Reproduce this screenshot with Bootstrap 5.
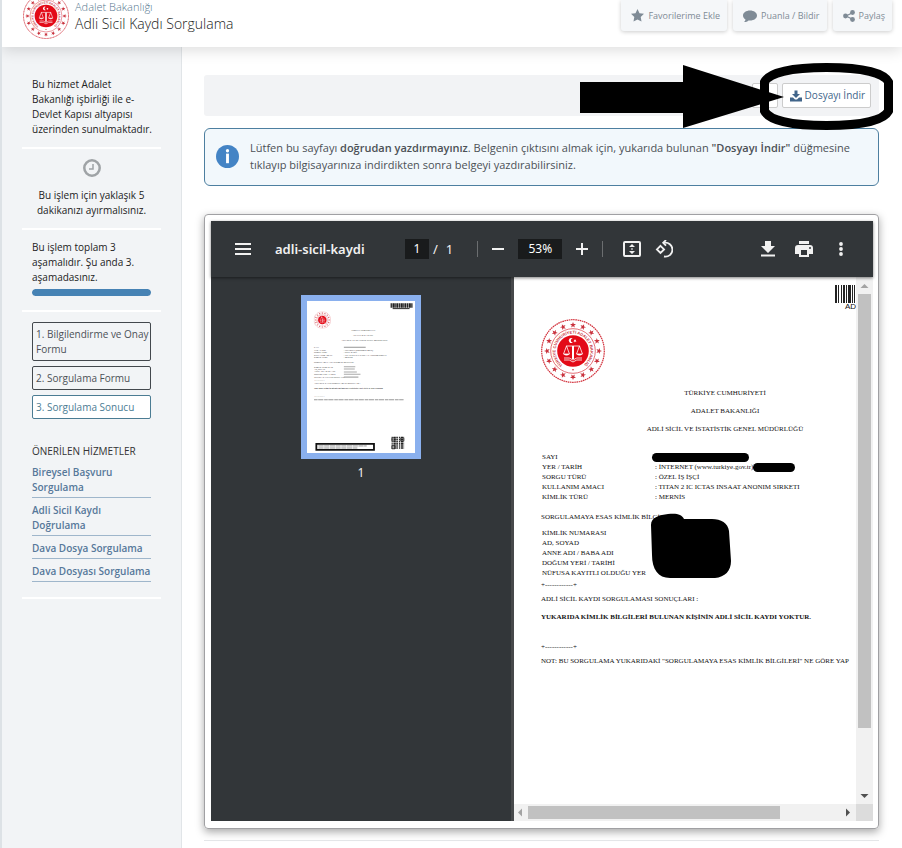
<!DOCTYPE html>
<html lang="tr">
<head>
<meta charset="utf-8">
<meta name="viewport" content="width=device-width, initial-scale=1">
<title>Adli Sicil Kaydı Sorgulama</title>
<link href="https://cdn.jsdelivr.net/npm/bootstrap@5.3.0/dist/css/bootstrap.min.css" rel="stylesheet">
<style>
body{font-family:"Open Sans","Noto Sans",sans-serif;font-size:10px;line-height:15px;color:#33383d;background:#fff;border-left:2px solid #dde2e6;min-height:100vh;overflow-x:hidden}
svg{display:block;flex-shrink:0}
.site-head{height:47px;background:#fff;box-shadow:0 3px 14px rgba(0,0,0,.14);position:relative;z-index:2;padding:0 10px 0 21px}
.site-head a{color:#56788f;font-size:11px;line-height:13px;text-decoration:none;font-weight:300}
.site-head h1{font-size:14px;line-height:20px;font-weight:300;margin:1px 0 0;color:#222}
.head-text{margin-left:6px}
.tools{gap:6px}
.tool{height:31px;border:0;border-radius:0 0 3px 3px;background:#f5f7f9;box-shadow:0 1px 4px rgba(0,0,0,.2);color:#7f8b96;font-size:9px;line-height:15px;padding:0 7px 0 10px;gap:4px}
.side{width:180px;flex-shrink:0;background:#f2f4f6;border-right:1px solid #e1e5e8;padding:20px 20px 0;color:#222}
.side section{padding:10px;border-bottom:2px solid #fff}
.side .intro{white-space:nowrap;padding-right:0}
.clock{margin-bottom:11px}
.meter{height:7px;border-radius:4px;background:#e1e5e8}
.meter .progress-bar{background:#4682b4;border-radius:4px}
.step{border:1px solid #43484d;border-radius:2px;padding:4px 0 3px 3px;margin-bottom:5px;color:#4c5156;white-space:nowrap}
.step.now{border-color:#4b7c93;background:#fff;color:#4b7c93}
.side h2{font-size:10px;line-height:15px;margin:25px 0 6px;color:#333}
.side li a{display:block;color:#56789a;font-weight:600;text-decoration:none;border-bottom:1px solid #9fb6cb;padding-bottom:2px}
.side li{margin-bottom:5px}
.main-area{min-width:0;padding:28px 23px 8px 22px}
.action-bar{background:#f2f3f5;height:41px;border-radius:3px;padding:0 8px}
.act{border:1px solid #ccc;border-radius:2px;background:#fff;height:25px;font-size:10px;color:#41658a;padding:0 5px 0 7px;gap:3px;font-weight:500}
.callout{right:-14px;top:-12px;pointer-events:none}
.note{border:1px solid #4d7fa0;border-radius:6px;background:#f2f8fc;margin:12px 0 28px;padding:10px 20px 12px 11px;font-size:11px;line-height:17px;gap:11px;color:#4c5156}
.note strong{font-weight:600}
.frame{border:1px solid #a0a0a3;border-radius:4px;padding:6px 5px 7px 6px;box-shadow:0 3px 8px rgba(0,0,0,.35)}
.pdf-bar{height:56px;background:#323639;color:#f1f1f1;padding:0 24px;font:13px/20px "Noto Sans","Open Sans",sans-serif;box-shadow:0 1px 3px rgba(0,0,0,.5);position:relative;z-index:1}
.pdf-bar button{border:0;background:none;padding:0;color:#f1f1f1}
.pdf-bar .gap-a{margin-left:14px}
.pdf-bar .gap-b{margin-left:20px}
.pdf-name{width:130px;margin-left:24px;font-weight:600}
.pdf-bar input{width:24px;height:20px;border:0;background:#191b1c;color:#fff;text-align:center;font-size:12px;padding:0}
.pdf-bar input.zoom-box{width:44px}
.vr-line{width:1px;height:16px;background:#6b6e70}
.pdf-body{height:544px;background:#323639}
.thumbs{width:300px;flex-shrink:0;color:#f1f1f1;font:12px/18px "Noto Sans",sans-serif;padding-top:18px}
.thumb{border:6px solid #8ab0ee;background:#fff;margin-bottom:5px}
.view{border-left:3px solid #47494b;background:#fff;min-width:0}
.view-row{min-height:0}
.doc{font:7px/10px "Liberation Serif",serif;color:#111;overflow:hidden;padding:0 0 0 27px;white-space:nowrap;min-width:0;position:relative}
.doc h2,.doc h3{font-size:7px;line-height:18px;margin:0;font-weight:400}
.doc .seal{margin:42px 0 1px}
.doc .centre{width:370px;margin-left:-1px;text-align:center}
.doc table{margin-bottom:2px}
.doc .query{margin:14px 0 6px}
.doc h3{margin-bottom:2px}
.doc th{font-weight:400;width:114px;padding:0 0 0 1px}
.doc td{padding:0}
.doc p{margin:0}
.code{right:0;top:8px}
.code span{font:8px/7px "Liberation Sans",sans-serif}
.redact{background:#000;border-radius:5px;height:9px;width:42px;display:inline-block;vertical-align:middle}
.redact.long{width:97px;margin-left:-3px}
.blot{left:136px;top:236px}
.bar-v{width:17px;background:#f1f1f1;flex-shrink:0}
.bar-v .grip{width:13px;height:434px;background:#c1c1c1}
.bar-h{height:17px;background:#f1f1f1}
.bar-h .grip{height:13px;width:252px;background:#c1c1c1}
.end-rule{border-top:1px solid #e4e6e8;margin:11px 0 0}
</style>
<script src="https://cdn.jsdelivr.net/npm/bootstrap@5.3.0/dist/js/bootstrap.bundle.min.js"></script>
</head>
<body>
<svg width="0" height="0" class="position-absolute" aria-hidden="true">
<defs>
<path id="star" d="M0-3 .8-.9 3-.9 1.2.4 1.9 2.6 0 1.3-1.9 2.6-1.2.4-3-.9-.8-.9Z"/>
<path id="ring" d="M-11 13.500A17.400 17.400 0 1 1 11 13.500"/>
<symbol id="emblem" viewBox="-32 -32 64 64">
<circle r="31.3" fill="#fff" stroke="#d2303b" stroke-width="1.2" stroke-dasharray="1.6 .6"/>
<circle r="22.300" fill="none" stroke="#d8323e" stroke-width=".7"/>
<circle r="15.800" fill="#e30a17"/>
<g fill="#c9313c"><use href="#star" y="-26"/><use href="#star" y="-26" transform="rotate(22.5)"/><use href="#star" y="-26" transform="rotate(45)"/><use href="#star" y="-26" transform="rotate(67.5)"/><use href="#star" y="-26" transform="rotate(90)"/><use href="#star" y="-26" transform="rotate(112.5)"/><use href="#star" y="-26" transform="rotate(135)"/><use href="#star" y="-26" transform="rotate(157.5)"/><use href="#star" y="-26" transform="rotate(180)"/><use href="#star" y="-26" transform="rotate(202.5)"/><use href="#star" y="-26" transform="rotate(225)"/><use href="#star" y="-26" transform="rotate(247.5)"/><use href="#star" y="-26" transform="rotate(270)"/><use href="#star" y="-26" transform="rotate(292.5)"/><use href="#star" y="-26" transform="rotate(315)"/><use href="#star" y="-26" transform="rotate(337.5)"/></g>
<text font-family="Liberation Sans" font-size="4" font-weight="700" fill="#c9313c" text-anchor="middle"><textPath href="#ring" startOffset="50%">TÜRKİYE CUMHURİYETİ ADALET BAKANLIĞI</textPath></text>
<circle cy="18.800" r=".8" fill="#c9212d"/>
<g fill="none" stroke="#fff" stroke-width=".8"><path d="M-7-5H7M-6.500-5-9.500 3H-3.500ZM6.500-5 3.500 3H9.500ZM-9 7Q-3 6 0 9Q3 6 9 7M-9 9Q-3 8 0 11Q3 8 9 9"/></g>
<path fill="#fff" d="M-9.500 3H-3.500Q-6.500 6-9.500 3ZM3.500 3H9.500Q6.500 6 3.500 3ZM-1-5H1V8H-1ZM-.2-12.500A2.500 2.500 0 1 0-.2-8.500A2 2 0 1 1-.2-12.500ZM1-11.500l1 .6 1-.6-.3 1.200 1 .6-1.200.3-.6 1-.4-1.100-1.200-.2 1-.7Z"/>
</symbol>
</defs>
</svg>

<header class="site-head d-flex align-items-start">
  <svg width="46" height="39" viewBox="0 7 46 39" aria-hidden="true"><use href="#emblem" width="46" height="46"/></svg>
  <div class="head-text d-flex flex-column"><a href="#">Adalet Bakanlığı</a><h1>Adli Sicil Kaydı Sorgulama</h1></div>
  <div class="tools d-flex ms-auto">
    <button class="tool d-flex align-items-center"><svg width="13" height="13" viewBox="0 0 24 24" fill="currentColor"><path d="m12 0 3.700 7.800 8.300 1.100-6.100 5.800 1.500 8.600L12 19.200l-7.400 4.100 1.500-8.600L0 8.900l8.300-1.100Z"/></svg>Favorilerime Ekle</button>
    <button class="tool d-flex align-items-center"><svg width="14" height="12" viewBox="0 0 28 24" fill="currentColor"><path d="M14 1C6 1 0 5.500 0 11c0 3.300 2 6 5 7.900C4.800 21 3.500 22.500 2 24c4 0 7-1.200 9-3.200 10 1.200 17-3.400 17-9.800C28 5.500 22 1 14 1Z"/></svg>Puanla / Bildir</button>
    <button class="tool d-flex align-items-center"><svg width="12" height="12" viewBox="0 0 24 24" fill="currentColor"><path d="m6 12 13-6.500M6 12l13 6.500" stroke="currentColor" stroke-width="2.600"/><circle cx="5" cy="12" r="4.800"/><circle cx="19" cy="5" r="4.800"/><circle cx="19" cy="19" r="4.800"/></svg>Paylaş</button>
  </div>
</header>

<div class="d-flex align-items-stretch">
  <aside class="side">
    <section class="intro">Bu hizmet Adalet<br>Bakanlığı işbirliği ile e-<br>Devlet Kapısı altyapısı<br>üzerinden sunulmaktadır.</section>
    <section class="text-center">
      <svg class="clock mx-auto" width="18" height="18" viewBox="0 0 18 18" fill="none" stroke="#9fa3a6"><circle cx="9" cy="9" r="7.700" stroke-width="2.500"/><path d="M10 5V10H6" stroke-width="1.500"/></svg>
      Bu işlem için yaklaşık 5 dakikanızı ayırmalısınız.
    </section>
    <section>Bu işlem toplam 3 aşamalıdır. Şu anda 3. aşamadasınız.
      <div class="progress meter mt-1 mb-1" role="progressbar" aria-label="Aşama" aria-valuenow="3" aria-valuemin="0" aria-valuemax="3"><div class="progress-bar" style="width:100%"></div></div>
    </section>
    <section>
      <div class="step">1. Bilgilendirme ve Onay<br>Formu</div>
      <div class="step">2. Sorgulama Formu</div>
      <div class="step now">3. Sorgulama Sonucu</div>
      <h2>ÖNERİLEN HİZMETLER</h2>
      <ul class="list-unstyled mb-0">
        <li><a href="#">Bireysel Başvuru Sorgulama</a></li>
        <li><a href="#">Adli Sicil Kaydı Doğrulama</a></li>
        <li><a href="#">Dava Dosya Sorgulama</a></li>
        <li><a href="#">Dava Dosyası Sorgulama</a></li>
      </ul>
    </section>
  </aside>

  <main class="main-area flex-grow-1">
    <div class="action-bar d-flex align-items-center justify-content-end position-relative">
      <button class="act me-1" aria-label="Yazdır"><svg width="12" height="12"></svg></button>
      <button class="act d-flex align-items-center"><svg width="12" height="12" viewBox="0 0 24 24" fill="currentColor"><path d="M9 1h6v7h5l-8 8-8-8h5ZM0 15h6l4 4h4l4-4h6v8H0Z"/></svg>Dosyayı İndir</button>
      <svg class="callout position-absolute" width="313" height="67" viewBox="0 0 313 67" aria-hidden="true"><path d="M0 19H103V2L204 34 103 65V50H0Z"/><path fill="none" stroke="#000" stroke-width="9" d="M184.500 19C189 10 210 4.500 246.500 4.500S304 10 308.500 19V48C304 57 283 62.500 246.500 62.500S189 57 184.500 48Z"/></svg>
    </div>

    <div class="note d-flex align-items-center">
      <svg width="23" height="23" viewBox="0 0 24 24"><circle cx="12" cy="12" r="12" fill="#4484c5"/><circle cx="12" cy="6" r="1.700" fill="#fff"/><path d="M10.500 9h3v10h-3Z" fill="#fff"/></svg>
      <div>Lütfen bu sayfayı <strong>doğrudan yazdırmayınız</strong>. Belgenin çıktısını almak için, yukarıda bulunan <strong>"Dosyayı İndir"</strong> düğmesine tıklayıp bilgisayarınıza indirdikten sonra belgeyi yazdırabilirsiniz.</div>
    </div>

    <div class="frame">
      <div class="pdf-bar d-flex align-items-center">
        <button aria-label="Menü"><svg width="16" height="12" viewBox="0 0 16 12" fill="currentColor"><path d="M0 0h16v2H0ZM0 5h16v2H0ZM0 10h16v2H0Z"/></svg></button>
        <div class="pdf-name">adli-sicil-kaydi</div>
        <input value="1" aria-label="Sayfa"><span class="ms-1">/</span><span class="ms-2">1</span>
        <span class="vr-line ms-4"></span>
        <button class="gap-a" aria-label="Uzaklaştır"><svg width="12" height="12" fill="currentColor"><path d="M0 5h12v2H0Z"/></svg></button>
        <input class="zoom-box gap-a" value="53%" aria-label="Yakınlaştırma">
        <button class="gap-a" aria-label="Yakınlaştır"><svg width="12" height="12" fill="currentColor"><path d="M0 5h5V0h2v5h5v2H7v5H5V7H0Z"/></svg></button>
        <span class="vr-line gap-a"></span>
        <button class="gap-b" aria-label="Sayfaya sığdır"><svg width="18" height="16" viewBox="0 0 18 16" fill="currentColor"><path fill-rule="evenodd" d="M2 0h14q2 0 2 2v12q0 2-2 2H2q-2 0-2-2V2Q0 0 2 0Zm0 2v12h14V2Z"/><path d="m9 3 3 3H6ZM9 13l-3-3h6ZM8.300 7.300h1.400v1.400H8.300Z"/></svg></button>
        <button class="gap-a" aria-label="Döndür"><svg width="18" height="18" viewBox="0 0 18 18" fill="none" stroke="currentColor" stroke-width="1.800"><path d="m5.500 5.800 3.600 3.600-3.600 3.600L1.900 9.400ZM9 16.500A7 7 0 1 0 9 2.800M11 0 8.200 2.800 11 5.600"/></svg></button>
        <button class="ms-auto" aria-label="İndir"><svg width="14" height="16" viewBox="0 0 14 16" fill="currentColor"><path d="M4 0h6v5h4l-7 7-7-7h4ZM0 13.500h14V15.500H0Z"/></svg></button>
        <button class="gap-b" aria-label="Yazdır"><svg width="18" height="16" viewBox="0 0 18 16" fill="currentColor"><path fill-rule="evenodd" d="M4 0h10v3H4ZM3 4h12q3 0 3 3v6h-4v3H4v-3H0V7Q0 4 3 4Zm3 5v5h6V9Zm9-3a1 1 0 1 0 0 2 1 1 0 0 0 0-2Z"/></svg></button>
        <button class="gap-b" aria-label="Diğer"><svg width="16" height="16" viewBox="0 0 16 16" fill="currentColor"><circle cx="8" cy="3" r="1.900"/><circle cx="8" cy="8" r="1.900"/><circle cx="8" cy="13" r="1.900"/></svg></button>
      </div>

      <div class="pdf-body d-flex">
        <div class="thumbs d-flex flex-column align-items-center">
          <div class="thumb">
            <svg width="108" height="152" viewBox="0 0 416 585" font-family="Liberation Serif" font-size="8" aria-hidden="true">
              <use href="#emblem" x="26" y="40" width="66" height="66"/>
              <path d="M322 17h86" fill="none" stroke="#222" stroke-width="18" stroke-dasharray="5 2 9 1 3 2 7 2"/><path d="M330 29h65" stroke="#333" stroke-width="4"/>
              <text x="170" y="117">TÜRKİYE CUMHURİYETİ</text><text x="176" y="135">ADALET BAKANLIĞI</text><text x="132" y="153">ADLİ SİCİL VE İSTATİSTİK GENEL MÜDÜRLÜĞÜ</text>
              <text x="27" y="181">SAYI</text><text x="27" y="191">YER / TARİH</text><text x="27" y="201">SORGU TÜRÜ</text><text x="27" y="211">KULLANIM AMACI</text><text x="27" y="221">KİMLİK TÜRÜ</text>
              <path d="M142 178h84" stroke="#999" stroke-width="4"/>
              <text x="142" y="191">: İNTERNET (www.turkiye.gov.tr)</text><text x="142" y="201">: ÖZEL İŞ İŞÇİ</text><text x="142" y="211">: TITAN 2 IC ICTAS INSAAT ANONIM SIRKETI</text><text x="142" y="221">: MERNİS</text>
              <text x="27" y="240">SORGULAMAYA ESAS KİMLİK BİLGİLERİ</text>
              <text x="27" y="256">KİMLİK NUMARASI</text><text x="27" y="265">AD, SOYAD</text><text x="27" y="275">ANNE ADI / BABA ADI</text><text x="27" y="285">DOĞUM YERİ / TARİHİ</text><text x="27" y="295">NÜFUSA KAYITLI OLDUĞU YER</text>
              <path d="M142 253h44M142 262h42M142 273h50M142 282h64M142 293h56" stroke="#aaa" stroke-width="4"/>
              <text x="27" y="307">+------------+</text><text x="27" y="321">ADLİ SİCİL KAYDI SORGULAMASI SONUÇLARI :</text>
              <text x="27" y="339" font-weight="700" font-size="7">YUKARIDA KİMLİK BİLGİLERİ BULUNAN KİŞİNİN ADLİ SİCİL KAYDI YOKTUR.</text>
              <text x="27" y="368">+------------+</text><path d="M27 380h345" stroke="#999" stroke-width="4" stroke-dasharray="14 2 20 3"/>
              <path d="M36 550H258V573H36Z" fill="#fff" stroke="#111" stroke-width="7"/><path d="M44 558h186M44 566h150" stroke="#777" stroke-width="3" stroke-dasharray="20 2"/>
              <g fill="none" stroke="#222"><path d="M326 526H374M326 534H374M326 542H374M326 550H374M326 558H374M326 566H374" stroke-width="6" stroke-dasharray="4 3 9 2 6 4"/><path d="M327 527h12v12h-12ZM361 527h12v12h-12ZM327 557h12v12h-12Z" stroke-width="3"/></g>
            </svg>
          </div>1
        </div>
        <div class="view d-flex flex-column flex-grow-1">
          <div class="view-row d-flex flex-grow-1">
            <div class="doc flex-grow-1">
              <div class="code position-absolute d-flex flex-column align-items-end">
                <svg width="21" height="18"><path fill="#222" d="M0 0h2v18H0ZM3 0h1v18H3ZM6 0h1v18H6ZM8 0h2v18H8ZM11 0h1v18h-1ZM13 0h3v18h-3ZM17 0h1v18h-1ZM19 0h1v18h-1Z"/></svg><span>AD</span>
              </div>
              <svg class="seal" width="64" height="64"><use href="#emblem" width="64" height="64"/></svg>
              <div class="centre"><h2>TÜRKİYE CUMHURİYETİ</h2><h2>ADALET BAKANLIĞI</h2><h2>ADLİ SİCİL VE İSTATİSTİK GENEL MÜDÜRLÜĞÜ</h2></div>
              <table class="query">
                <tr><th>SAYI</th><td><span class="redact long"></span></td></tr>
                <tr><th>YER / TARİH</th><td>: İNTERNET (www.turkiye.gov.tr)<span class="redact"></span></td></tr>
                <tr><th>SORGU TÜRÜ</th><td>: ÖZEL İŞ İŞÇİ</td></tr>
                <tr><th>KULLANIM AMACI</th><td>: TITAN 2 IC ICTAS INSAAT ANONIM SIRKETI</td></tr>
                <tr><th>KİMLİK TÜRÜ</th><td>: MERNİS</td></tr>
              </table>
              <h3>SORGULAMAYA ESAS KİMLİK BİLGİLERİ</h3>
              <table>
                <tr><th>KİMLİK NUMARASI</th></tr>
                <tr><th>AD, SOYAD</th></tr>
                <tr><th>ANNE ADI / BABA ADI</th></tr>
                <tr><th>DOĞUM YERİ / TARİHİ</th></tr>
                <tr><th>NÜFUSA KAYITLI OLDUĞU YER</th></tr>
              </table>
              <p>+------------+</p>
              <p class="mt-1">ADLİ SİCİL KAYDI SORGULAMASI SONUÇLARI :</p>
              <p class="mt-2 mb-3 fw-bold">YUKARIDA KİMLİK BİLGİLERİ BULUNAN KİŞİNİN ADLİ SİCİL KAYDI YOKTUR.</p>
              <p class="pt-1">+------------+</p>
              <p class="mt-1">NOT: BU SORGULAMA YUKARIDAKİ "SORGULAMAYA ESAS KİMLİK BİLGİLERİ" NE GÖRE YAP</p>
              <svg class="blot position-absolute" width="82" height="66" viewBox="0 0 82 66"><path d="M1 12C1 4 10 2 18 1c8-1 14 0 16 5h28c9 0 16 4 17 12l2 30c0 10-6 16-16 17H20C8 65 2 56 2 42Z"/></svg>
            </div>
            <div class="bar-v d-flex flex-column align-items-center">
              <svg width="17" height="17" fill="#a3a3a3"><path d="m8.500 7 4 4h-8Z"/></svg>
              <div class="grip"></div>
              <svg class="mt-auto" width="17" height="17" fill="#505050"><path d="m8.500 11-4-4h8Z"/></svg>
            </div>
          </div>
          <div class="bar-h d-flex align-items-center">
            <svg width="14" height="17" fill="#a3a3a3"><path d="m4 8.500 4-4v8Z"/></svg>
            <div class="grip"></div>
            <svg class="ms-auto" width="17" height="17" fill="#505050"><path d="m11 8.500-4-4v8Z"/></svg>
            <svg width="17" height="17"><path fill="#dcdcdc" d="M0 0h17v17H0Z"/></svg>
          </div>
        </div>
      </div>
    </div>
    <div class="end-rule"></div>
  </main>
</div>
</body>
</html>
